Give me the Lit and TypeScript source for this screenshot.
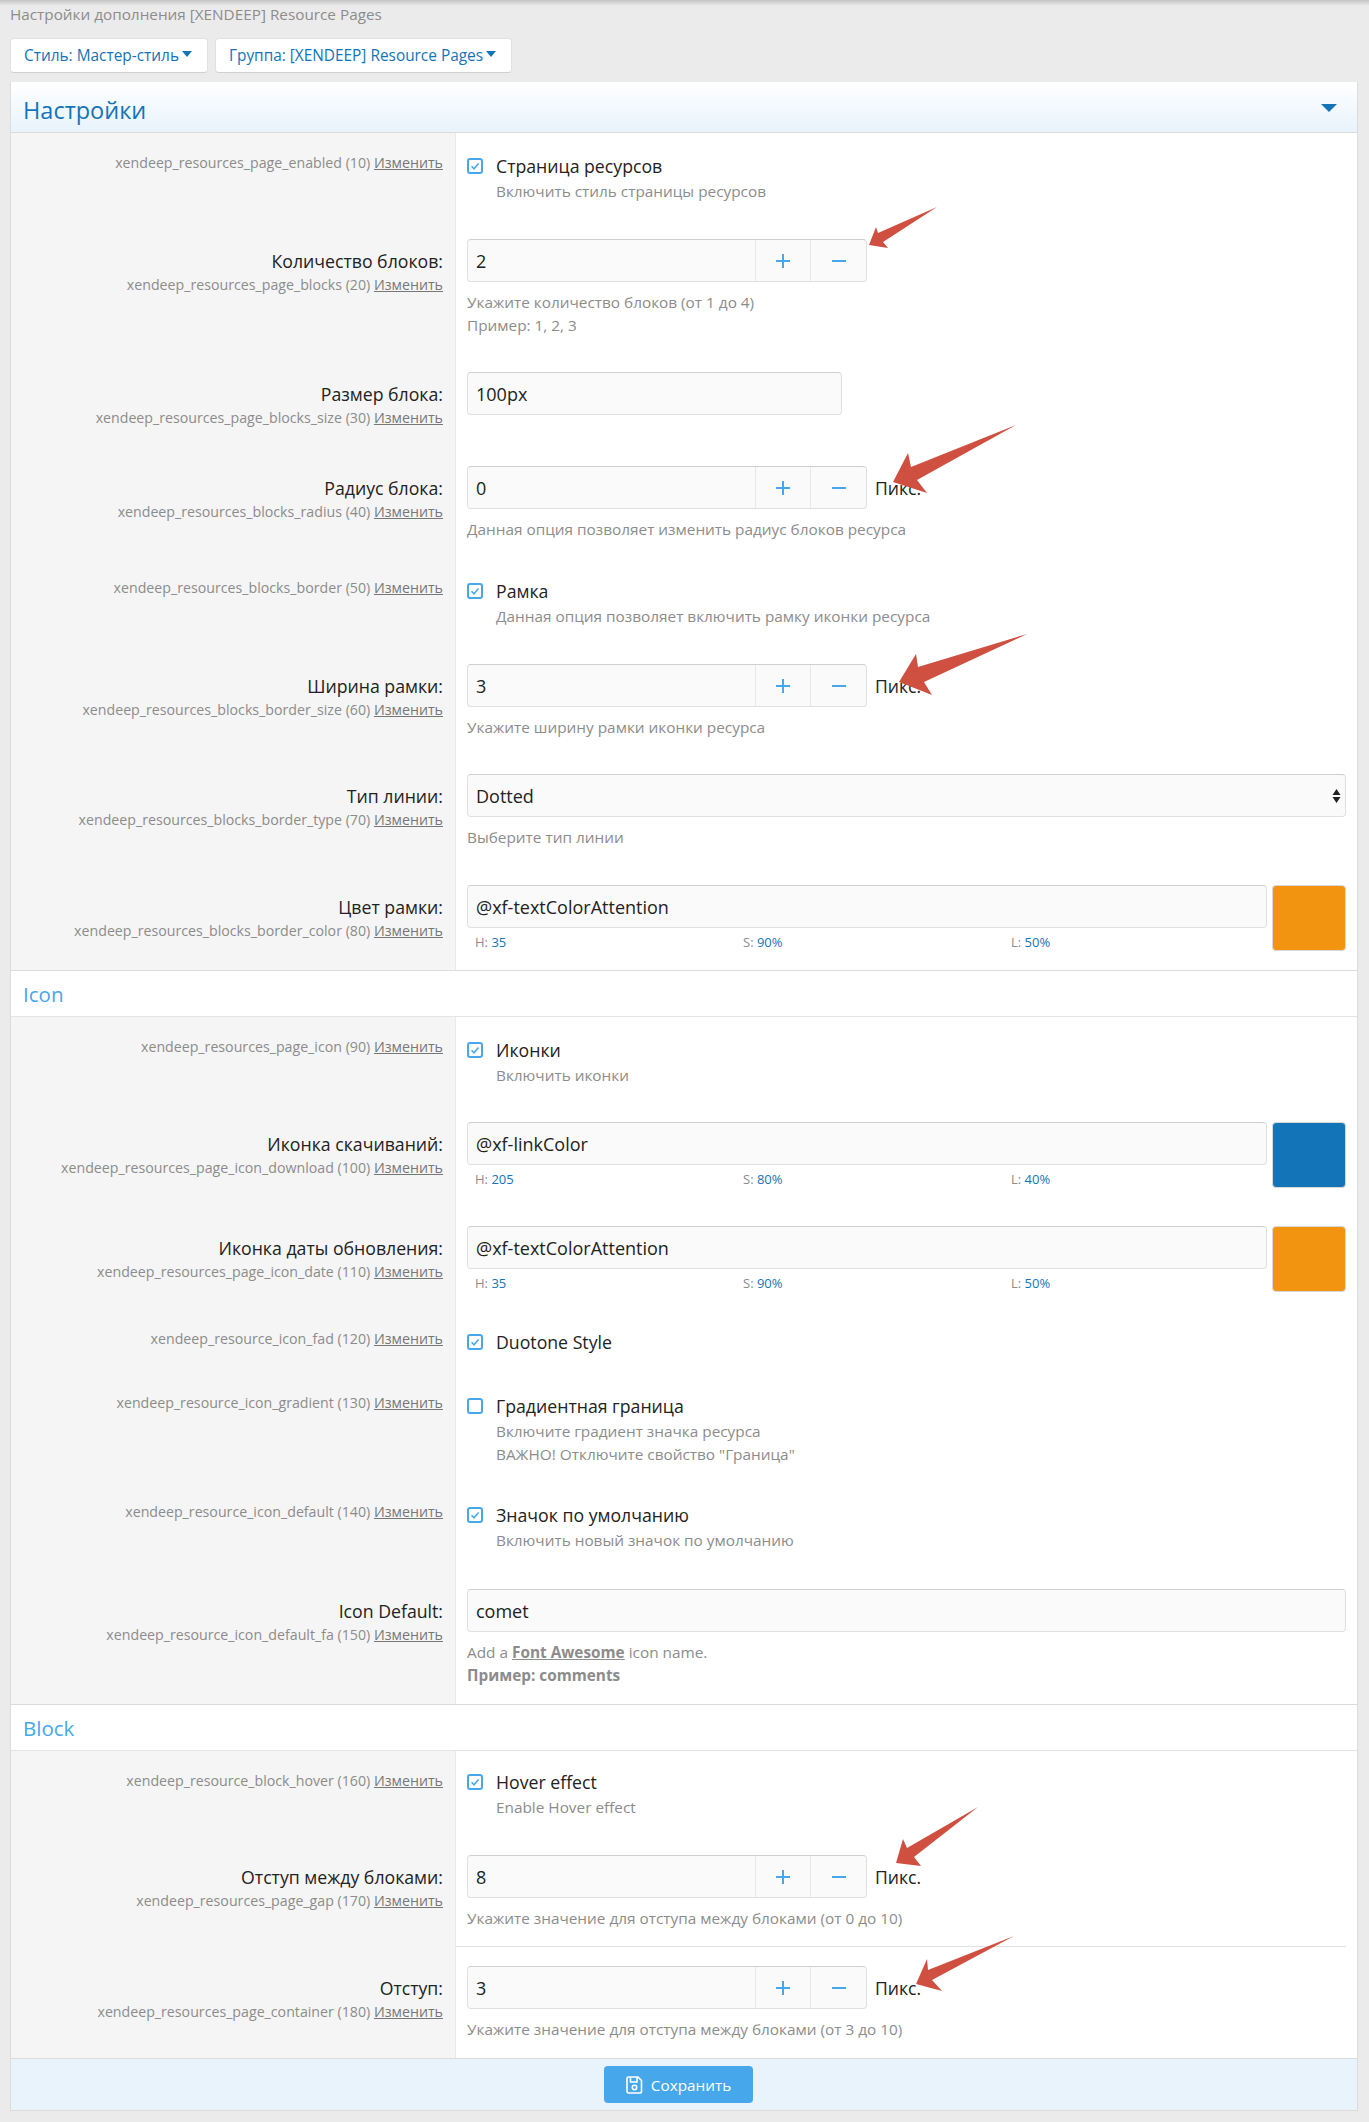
import { LitElement, html, css, nothing, svg } from 'lit'
import { customElement } from 'lit/decorators.js'

type Control =
  | { kind: 'check'; text: string; hints?: string[]; checked?: boolean }
  | { kind: 'spin'; value: string; unit?: boolean; hints?: string[] }
  | { kind: 'text'; value: string; short?: boolean; hints?: unknown[] }
  | { kind: 'select'; value: string; hints?: string[] }
  | { kind: 'color'; value: string; swatch: string; hsl: [string, string, string] }

interface Row {
  label?: string
  name: string
  order: number
  control: Control
  cls?: string
}

const ORANGE = '#f39410'
const BLUE = '#1474b8'

const settings: Row[] = [
  { name: 'xendeep_resources_page_enabled', order: 10, control: { kind: 'check', text: 'Страница ресурсов', hints: ['Включить стиль страницы ресурсов'] } },
  { label: 'Количество блоков', name: 'xendeep_resources_page_blocks', order: 20, control: { kind: 'spin', value: '2', hints: ['Укажите количество блоков (от 1 до 4)', 'Пример: 1, 2, 3'] } },
  { label: 'Размер блока', name: 'xendeep_resources_page_blocks_size', order: 30, cls: 'tall', control: { kind: 'text', value: '100px', short: true } },
  { label: 'Радиус блока', name: 'xendeep_resources_blocks_radius', order: 40, control: { kind: 'spin', value: '0', unit: true, hints: ['Данная опция позволяет изменить радиус блоков ресурса'] } },
  { name: 'xendeep_resources_blocks_border', order: 50, control: { kind: 'check', text: 'Рамка', hints: ['Данная опция позволяет включить рамку иконки ресурса'] } },
  { label: 'Ширина рамки', name: 'xendeep_resources_blocks_border_size', order: 60, control: { kind: 'spin', value: '3', unit: true, hints: ['Укажите ширину рамки иконки ресурса'] } },
  { label: 'Тип линии', name: 'xendeep_resources_blocks_border_type', order: 70, control: { kind: 'select', value: 'Dotted', hints: ['Выберите тип линии'] } },
  { label: 'Цвет рамки', name: 'xendeep_resources_blocks_border_color', order: 80, cls: 'pt19 pb19', control: { kind: 'color', value: '@xf-textColorAttention', swatch: ORANGE, hsl: ['35', '90%', '50%'] } },
]

const icons: Row[] = [
  { name: 'xendeep_resources_page_icon', order: 90, cls: 'pb17', control: { kind: 'check', text: 'Иконки', hints: ['Включить иконки'] } },
  { label: 'Иконка скачиваний', name: 'xendeep_resources_page_icon_download', order: 100, cls: 'pb20', control: { kind: 'color', value: '@xf-linkColor', swatch: BLUE, hsl: ['205', '80%', '40%'] } },
  { label: 'Иконка даты обновления', name: 'xendeep_resources_page_icon_date', order: 110, cls: 'pb17', control: { kind: 'color', value: '@xf-textColorAttention', swatch: ORANGE, hsl: ['35', '90%', '50%'] } },
  { name: 'xendeep_resource_icon_fad', order: 120, cls: 'pb20', control: { kind: 'check', text: 'Duotone Style' } },
  { name: 'xendeep_resource_icon_gradient', order: 130, cls: 'pb16', control: { kind: 'check', checked: false, text: 'Градиентная граница', hints: ['Включите градиент значка ресурса', 'ВАЖНО! Отключите свойство "Граница"'] } },
  { name: 'xendeep_resource_icon_default', order: 140, cls: 'pb19', control: { kind: 'check', text: 'Значок по умолчанию', hints: ['Включить новый значок по умолчанию'] } },
  {
    label: 'Icon Default', name: 'xendeep_resource_icon_default_fa', order: 150,
    control: {
      kind: 'text', value: 'comet',
      hints: [html`Add a <a class="fa-link">Font Awesome</a> icon name.`, html`<b>Пример: comments</b>`],
    },
  },
]

const blocks: Row[] = [
  { name: 'xendeep_resource_block_hover', order: 160, cls: 'first-block', control: { kind: 'check', text: 'Hover effect', hints: ['Enable Hover effect'] } },
  { label: 'Отступ между блоками', name: 'xendeep_resources_page_gap', order: 170, cls: 'pb17', control: { kind: 'spin', value: '8', unit: true, hints: ['Укажите значение для отступа между блоками (от 0 до 10)'] } },
  { label: 'Отступ', name: 'xendeep_resources_page_container', order: 180, cls: 'sep', control: { kind: 'spin', value: '3', unit: true, hints: ['Укажите значение для отступа между блоками (от 3 до 10)'] } },
]

// red annotation arrows painted over the finished screenshot
const arrows = [
  '937,207 878,233 876,227 869,245 888,248 883,242',
  '1016,425 911,467 908,453 893,482 927,493 917,480',
  '1027,634 918,667 916,654 899,682 932,695 924,682',
  '978,1807 907,1848 903,1839 896,1863 921,1866 914,1857',
  '1014,1936 928,1970 927,1959 916,1984 942,1991 932,1980',
]

@customElement('app-root')
export class AppRoot extends LitElement {
  static styles = css`
    :host {
      display: block;
      position: relative;
      min-height: 2122px;
      background: #ebebeb;
      font-family: 'Open Sans', 'Liberation Sans', sans-serif;
      font-size: 15px;
      color: #222;
    }
    .shadow { height: 6px; background: linear-gradient(#c4c4c4, #ebebeb); }
    .crumb { height: 32px; line-height: 16px; padding-left: 10px; color: #8c8c8c; font-size: 15.3px; }
    .tools { display: flex; gap: 7px; padding-left: 10px; height: 44px; }
    .tool {
      height: 35px; box-sizing: border-box; padding: 0 15px 0 13px; display: flex; align-items: center; gap: 3px;
      background: #fff; border: 1px solid #e0e0e0; border-bottom-color: #d0d0d0; border-radius: 4px;
      color: #1474b8; font-size: 15.4px;
    }
    .caret { width: 0; height: 0; border: 5px solid transparent; border-top: 6px solid #1474b8; border-bottom: 0; margin-top: -3px; }
    .block { margin: 0 11px 0 10px; background: #fff; border-right: 1px solid #dcdcdc; border-left: 1px solid #dcdcdc; }
    .head {
      height: 51px; box-sizing: border-box; display: flex; align-items: center; justify-content: space-between;
      padding: 0 20px 0 12px; background: linear-gradient(#fff, #e8f3fc); border-bottom: 1px solid #dcdcdc;
      color: #1474b8; font-size: 23.5px;
    }
    .head span { margin-top: 5px; }
    .head i { width: 0; height: 0; margin-top: 2px; border: 8px solid transparent; border-top: 8px solid #1474b8; border-bottom: 0; }
    .sub {
      height: 47px; box-sizing: border-box; display: flex; align-items: center; padding-left: 12px;
      border-top: 1px solid #dcdcdc; border-bottom: 1px solid #e4e4e4; color: #47a7eb; font-size: 20.5px;
    }
    .row { display: grid; grid-template-columns: 445px minmax(0, 1fr); }
    .left { background: #f5f5f5; border-right: 1px solid #e9e9e9; padding: 28px 12px 0 0; text-align: right; }
    .left.bare { padding-top: 19px; }
    .label { font-size: 17.7px; line-height: 24px; color: #222; }
    .label + .small { margin-top: 1px; }
    .small { font-size: 14.2px; line-height: 22px; color: #8c8c8c; }
    .small a { text-decoration: underline; color: #777; }
    .right { position: relative; padding: 18px 11px 18px 11px; }
    .row.tall .right { padding-bottom: 33px; }
    .row.pb16 .right { padding-bottom: 16px; }
    .row.pb17 .right { padding-bottom: 17px; }
    .row.pb19 .right { padding-bottom: 19px; }
    .row.pb20 .right { padding-bottom: 20px; }
    .row.pt19 .right { padding-top: 19px; }
    .row.pt19 .left { padding-top: 29px; }
    .row.sep .right::before { content: ''; position: absolute; left: 0; right: 11px; top: 0; height: 1px; background: #e0e0e0; }
    .row.sep .right { padding-top: 20px; }
    .row.sep .left { padding-top: 30px; }
    .row.first-block .right { padding-top: 16px; }
    .check { display: flex; align-items: center; gap: 13px; height: 22px; margin-top: 4px; font-size: 17.7px; }
    .box { width: 16px; height: 16px; flex: none; display: block; }
    .hints { margin: 9px 0 -1px; }
    .check + .hints { margin: 3px 0 0; padding-left: 29px; }
    .hint { font-size: 15.35px; line-height: 23px; color: #8c8c8c; }
    .hint b { font-weight: 700; }
    .fa-link { font-weight: 700; text-decoration: underline; }
    .input {
      display: block; box-sizing: border-box; width: 100%; height: 43px; padding: 0 8px; margin: 0;
      background: #fafafa; border: 1px solid #e0e0e0; border-top-color: #cfcfcf; border-radius: 4px;
      font: inherit; font-size: 18px; color: #222; outline: none; appearance: none;
    }
    .input.short { width: 375px; }
    .spin-line { display: flex; align-items: center; gap: 8px; }
    .spin {
      display: grid; grid-template-columns: 1fr 55px 56px; width: 400px; height: 43px; box-sizing: border-box;
      background: #fafafa; border: 1px solid #e0e0e0; border-top-color: #cfcfcf; border-radius: 4px;
    }
    .spin span { display: flex; align-items: center; padding-left: 8px; font-size: 18px; }
    .spin button {
      display: flex; align-items: center; justify-content: center; padding: 0; background: none;
      border: 0; border-left: 1px solid #e8e8e8;
    }
    .unit { font-size: 17.6px; }
    .select-wrap { position: relative; }
    .select-wrap svg { position: absolute; right: 5px; top: 15px; }
    .color { display: grid; grid-template-columns: minmax(0, 1fr) 74px; column-gap: 5px; }
    .hsl { display: grid; grid-template-columns: 268px 268px 1fr; padding: 6px 0 0 8px; font-size: 13px; line-height: 16px; color: #8c8c8c; }
    .hsl a { color: #1474b8; }
    .swatch { height: 66px; box-sizing: border-box; border-radius: 4px; border: 1px solid #d8d8d8; }
    .foot { height: 53px; box-sizing: border-box; display: flex; align-items: center; padding-left: 593px; background: #e8f3fc; border-top: 1px solid #dcdcdc; border-bottom: 1px solid #dcdcdc; }
    .save {
      width: 149px; height: 37px; display: flex; align-items: center; justify-content: center; gap: 8px; padding: 0;
      background: #47a7eb; border: 0; border-radius: 4px; color: #fff; font: inherit; font-size: 15.3px;
    }
    .marks { position: absolute; left: 0; top: 0; pointer-events: none; }
  `

  private _box(checked: boolean) {
    return html`<svg class="box" viewBox="0 0 16 16">
      <rect x="1" y="1" width="14" height="14" rx="2" fill="#fff" stroke="#47a7eb" stroke-width="2"></rect>
      ${checked ? svg`<path d="M4.5 8.2l2.5 2.6 4.5-5.4" fill="none" stroke="#47a7eb" stroke-width="1.5"></path>` : nothing}
    </svg>`
  }

  private _hints(hints?: unknown[]) {
    if (!hints) return nothing
    return html`<div class="hints">${hints.map((h) => html`<div class="hint">${h}</div>`)}</div>`
  }

  private _control(c: Control) {
    switch (c.kind) {
      case 'check':
        return html`<div class="check">${this._box(c.checked !== false)}<span>${c.text}</span></div>${this._hints(c.hints)}`
      case 'spin':
        return html`<div class="spin-line">
            <div class="spin">
              <span>${c.value}</span>
              <button aria-label="plus"><svg width="16" height="16" viewBox="0 0 16 16"><path d="M8 1v14M1 8h14" stroke="#47a7eb" stroke-width="2"></path></svg></button>
              <button aria-label="minus"><svg width="16" height="16" viewBox="0 0 16 16"><path d="M1 8h14" stroke="#47a7eb" stroke-width="2"></path></svg></button>
            </div>
            ${c.unit ? html`<span class="unit">Пикс.</span>` : nothing}
          </div>${this._hints(c.hints)}`
      case 'text':
        return html`<input class="input ${c.short ? 'short' : ''}" .value=${c.value} />${this._hints(c.hints)}`
      case 'select':
        return html`<div class="select-wrap">
            <select class="input"><option>${c.value}</option></select>
            <svg width="9" height="14" viewBox="0 0 9 14"><path d="M4.5 0l4 6H.5zM4.5 14l4-6H.5z" fill="#222"></path></svg>
          </div>${this._hints(c.hints)}`
      case 'color':
        return html`<div class="color">
          <div>
            <input class="input" .value=${c.value} />
            <div class="hsl">
              <div>H: <a>${c.hsl[0]}</a></div>
              <div>S: <a>${c.hsl[1]}</a></div>
              <div>L: <a>${c.hsl[2]}</a></div>
            </div>
          </div>
          <div class="swatch" style="background:${c.swatch}"></div>
        </div>`
    }
  }

  private _row(r: Row) {
    return html`<div class="row ${r.cls ?? ''}">
      <div class="left ${r.label ? '' : 'bare'}">
        ${r.label ? html`<div class="label">${r.label}:</div>` : nothing}
        <div class="small">${r.name} (${r.order}) <a>Изменить</a></div>
      </div>
      <div class="right">${this._control(r.control)}</div>
    </div>`
  }

  render() {
    return html`
      <div class="shadow"></div>
      <div class="crumb">Настройки дополнения [XENDEEP] Resource Pages</div>
      <div class="tools">
        <div class="tool">Стиль: Мастер-стиль <span class="caret"></span></div>
        <div class="tool">Группа: [XENDEEP] Resource Pages <span class="caret"></span></div>
      </div>
      <div class="block">
        <div class="head"><span>Настройки</span><i></i></div>
        ${settings.map((r) => this._row(r))}
        <div class="sub">Icon</div>
        ${icons.map((r) => this._row(r))}
        <div class="sub">Block</div>
        ${blocks.map((r) => this._row(r))}
        <div class="foot">
          <button class="save">
            <svg width="17" height="18" viewBox="0 0 17 18" fill="none" stroke="#fff" stroke-width="1.6">
              <path d="M2.5 1h9.5l3.5 3.5V15.500a1.500 1.500 0 0 1-1.500 1.500H2.500a1.500 1.500 0 0 1-1.500-1.500V2.500a1.500 1.500 0 0 1 1.500-1.500z"></path>
              <path d="M4.500 1v5h6.500V1"></path>
              <circle cx="8.500" cy="11.500" r="2.200"></circle>
            </svg>
            Сохранить
          </button>
        </div>
      </div>
      <svg class="marks" width="1369" height="2122" viewBox="0 0 1369 2122">
        ${arrows.map((p) => svg`<polygon points=${p} fill="#cf5040"></polygon>`)}
      </svg>
    `
  }
}
